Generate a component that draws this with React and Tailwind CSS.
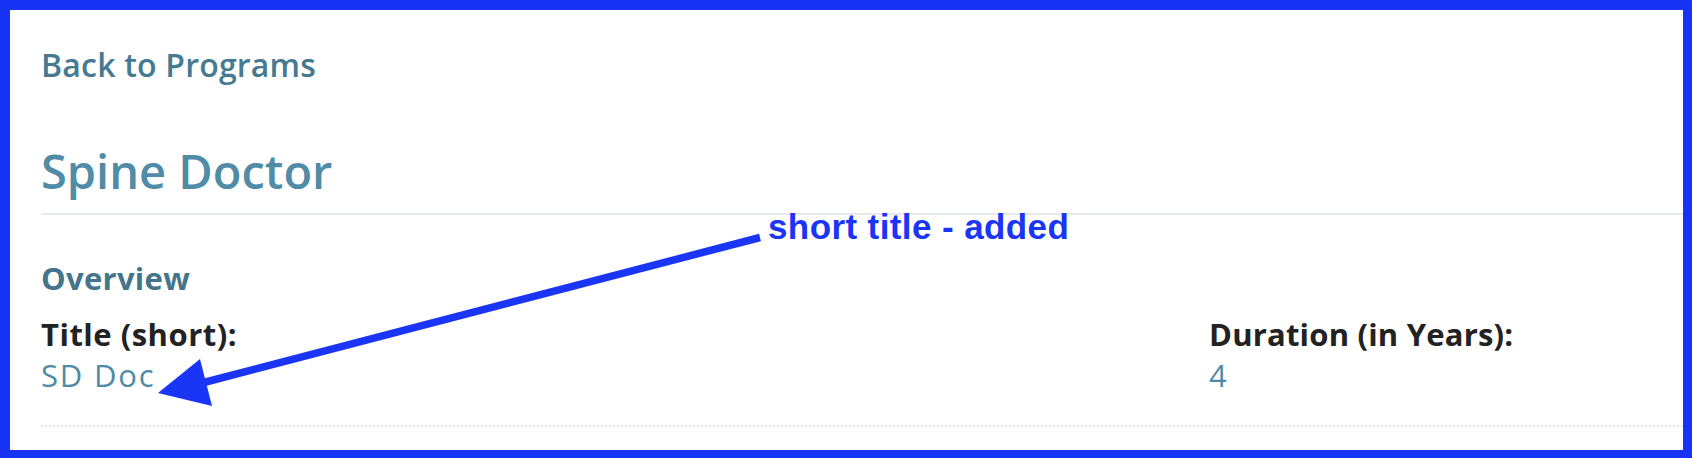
export default function App() {
  return (
    <div className="relative w-[1692px] h-[458px] bg-white border-t-[10px] border-l-[10px] border-r-[9px] border-b-[8px] border-[#1733f6] font-['Open_Sans',sans-serif] overflow-hidden">
      <div className="pl-[31px]">
        <a className="block mt-[39px] text-[32px] leading-[32px] tracking-[0.2px] text-[#457a91] font-semibold">
          Back to Programs
        </a>

        <div className="mt-[66px] pb-[18px] border-b-2 border-[#e6eaeb]">
          <h1 className="text-[47px] leading-[48px] text-[#508ba7] font-semibold">Spine Doctor</h1>
        </div>

        <h2 className="mt-[47px] text-[31px] leading-[32px] tracking-[0.3px] font-bold text-[#44758b]">Overview</h2>

        <div className="mt-[24px] grid grid-cols-[1168px_1fr] pb-[34px] border-b-2 border-dotted border-[#e3e6e8]">
          <div>
            <div className="text-[31px] leading-[32px] tracking-[0.5px] font-bold text-[#222]">Title (short):</div>
            <div className="mt-[9px] text-[31px] leading-[32px] tracking-[1.8px] text-[#4f8ba6]">SD Doc</div>
          </div>
          <div>
            <div className="text-[31px] leading-[32px] tracking-[0.2px] font-bold text-[#222]">Duration (in Years):</div>
            <div className="mt-[9px] text-[31px] leading-[32px] text-[#4f8ba6]">4</div>
          </div>
        </div>
      </div>

      {/* annotation overlay */}
      <div className="absolute left-[758px] top-[197px] font-['Liberation_Sans',Arial,sans-serif] font-bold text-[35px] leading-[40px] tracking-[0.4px] text-[#1a35f5]">
        short title - added
      </div>
      <svg className="absolute left-[-10px] top-[-10px] pointer-events-none" width="1692" height="458" viewBox="0 0 1692 458">
        <line x1="760" y1="237.5" x2="200" y2="383.5" stroke="#1a35f5" strokeWidth="7.5" />
        <polygon points="158,393 200,359 212,406" fill="#1a35f5" />
      </svg>
    </div>
  )
}
